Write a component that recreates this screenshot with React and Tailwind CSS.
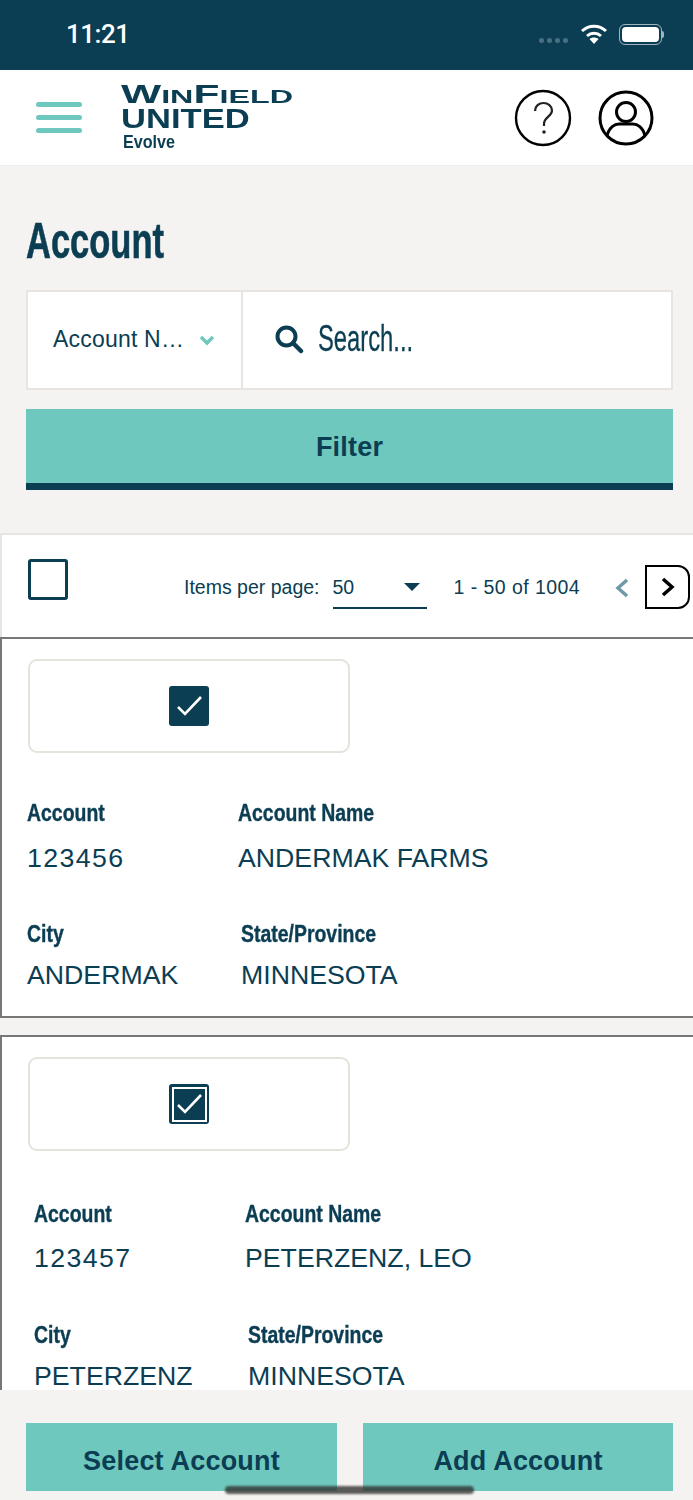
import React from 'react';

function Label({ children }) {
  return (
    <div className="h-[30px] text-[24px] leading-[30px] font-bold text-[#0b3d53] whitespace-nowrap origin-left scale-x-[0.81] [-webkit-text-stroke:0.4px_#0b3d53]">
      {children}
    </div>
  );
}

function Value({ children, className = '' }) {
  return (
    <div className={`h-[30px] text-[26.700px] leading-[30px] text-[#0b3d53] whitespace-nowrap ${className}`}>
      {children}
    </div>
  );
}

function Check({ ring }) {
  return (
    <div className="w-10 h-10 rounded-[3px] bg-[#0b3d53] flex items-center justify-center">
      <div className={`w-[35px] h-[35px] flex items-center justify-center ${ring ? 'border-2 border-white' : ''}`}>
        <svg width="28" height="24" viewBox="0 0 28 24" fill="none">
          <path d="M3 13l7 7L26 3" stroke="#fff" strokeWidth="2.6" />
        </svg>
      </div>
    </div>
  );
}

function CheckBox({ ring }) {
  return (
    <div className="ml-[1px] w-[322px] h-[94px] rounded-[9px] border-2 border-[#e6e2dc] bg-white flex items-center justify-center">
      <Check ring={ring} />
    </div>
  );
}

function Chevron({ color, width = 3 }) {
  return (
    <svg width="14" height="20" viewBox="0 0 14 20" fill="none">
      <path d="M2 2l9 8-9 8" stroke={color} strokeWidth={width} />
    </svg>
  );
}

export default function App() {
  return (
    <div className="relative w-[693px] h-[1500px] overflow-hidden flex flex-col bg-[#f4f3f1] font-['Liberation_Sans',sans-serif] text-[#0b3d53]">
      {/* status bar */}
      <div className="h-[70px] shrink-0 bg-[#0b3d53] flex items-center pl-[66px] pr-[29px] pb-[2px] text-white">
        <span className="text-[26px] font-medium font-['Roboto',sans-serif] tracking-[-0.5px]">11:21</span>
        <div className="ml-auto flex items-center">
          <div className="flex gap-[3px] mt-[12px] mr-[12px]">
            <i className="w-[5px] h-[5px] rounded-full bg-[#4a7082]" />
            <i className="w-[5px] h-[5px] rounded-full bg-[#4a7082]" />
            <i className="w-[5px] h-[5px] rounded-full bg-[#4a7082]" />
            <i className="w-[5px] h-[5px] rounded-full bg-[#4a7082]" />
          </div>
          <svg width="28" height="22" viewBox="0 0 28 22" fill="none" className="mr-[11px]">
            <path d="M2 8c7-6.500 17-6.500 24 0" stroke="#fff" strokeWidth="3" />
            <path d="M7 13c4-3.600 10-3.600 14 0" stroke="#fff" strokeWidth="3" />
            <path d="M14 21l-4.500-5c2.600-2 6.400-2 9 0z" fill="#fff" />
          </svg>
          <div className="w-[43px] h-[21px] rounded-[6px] border border-[#9fb4bf] p-[2px]">
            <div className="w-full h-full rounded-[4px] bg-white" />
          </div>
          <div className="w-[2px] h-[7px] bg-[#9fb4bf] rounded-r-sm" />
        </div>
      </div>

      {/* header */}
      <div className="h-[96px] shrink-0 bg-white flex items-center pl-9 pr-[38px] border-b border-[#efeeea]">
        <div className="flex flex-col gap-[8px] w-[46px]">
          <div className="h-[5px] rounded-full bg-[#6fc8bd]" />
          <div className="h-[5px] rounded-full bg-[#6fc8bd]" />
          <div className="h-[5px] rounded-full bg-[#6fc8bd]" />
        </div>
        <div className="ml-[39px] w-[175px] text-[#0b3d53] font-bold">
          <div className="h-[22px] leading-[22px] whitespace-nowrap origin-left scale-x-[1.7]">
            <span className="text-[25px]">W</span><span className="text-[19px]">IN</span><span className="text-[25px]">F</span><span className="text-[19px]">IELD</span>
          </div>
          <div className="h-[24px] mt-[2px] leading-[24px] text-[27px] whitespace-nowrap origin-left scale-x-[1.28]">UNITED</div>
          <div className="h-[22px] leading-[22px] text-[19px] ml-[2px] whitespace-nowrap origin-left scale-x-[0.85]">Evolve</div>
        </div>
        <svg width="58" height="58" viewBox="0 0 58 58" fill="none" className="ml-auto">
          <circle cx="29" cy="29" r="27" stroke="#000" strokeWidth="2.400" />
          <path d="M21 22c0-5 4-8 8.500-8s8.500 3 8.500 7.500c0 6-8 6.500-8 13.500v2" stroke="#222" strokeWidth="2.200" />
          <circle cx="30" cy="43" r="1.800" fill="#222" />
        </svg>
        <svg width="58" height="58" viewBox="0 0 58 58" fill="none" className="ml-[25px]">
          <circle cx="29" cy="29" r="26" stroke="#000" strokeWidth="3" />
          <circle cx="29" cy="23" r="9.500" stroke="#000" strokeWidth="3" />
          <path d="M10 47c2-9 8-12 12-12h14c4 0 10 3 12 12" stroke="#000" strokeWidth="3" />
        </svg>
      </div>

      {/* title + search */}
      <div className="shrink-0 pl-[26px] pr-5 pt-[46px]">
        <div className="h-[58px] text-[50px] leading-[58px] font-bold whitespace-nowrap origin-left scale-x-[0.69] [-webkit-text-stroke:0.6px_#0b3d53]">Account</div>
        <div className="mt-5 h-[100px] w-[647px] flex bg-white border-2 border-[#e8e4df]">
          <div className="w-[215px] shrink-0 border-r-2 border-[#e8e4df] flex items-center pl-[25px] pb-[1px]">
            <span className="text-[23px] tracking-[0.2px] whitespace-nowrap">Account N…</span>
            <svg width="16" height="11" viewBox="0 0 16 11" fill="none" className="ml-[15px] mt-[1px]">
              <path d="M2 2l6 6 6-6" stroke="#6fc8bd" strokeWidth="3.500" />
            </svg>
          </div>
          <div className="flex-1 flex items-center pl-[31px] pb-[3px]">
            <svg width="30" height="30" viewBox="0 0 30 30" fill="none">
              <circle cx="12.500" cy="12.500" r="9" stroke="#0b3d53" strokeWidth="4" />
              <path d="M19 19l8 8" stroke="#0b3d53" strokeWidth="4.500" strokeLinecap="round" />
            </svg>
            <span className="ml-[14px] text-[36px] leading-none whitespace-nowrap origin-left scale-x-[0.66] [-webkit-text-stroke:0.3px_#0b3d53]">Search...</span>
          </div>
        </div>
        <button className="mt-[19px] block w-[647px] h-[81px] pt-[2px] bg-[#6fc8bd] border-b-[7px] border-[#0b3d53] text-[27px] tracking-[0.2px] font-bold text-[#0b3d53]">
          Filter
        </button>
      </div>

      {/* pager */}
      <div className="mt-[43px] h-[104px] shrink-0 bg-white border-t-2 border-l-2 border-[#e8e4df] flex items-center pl-[26px]">
        <div className="w-10 h-[41px] rounded-[3px] border-[3px] border-[#0b3d53] mt-[-14px]" />
        <span className="ml-[116px] mt-[3px] text-[19.500px] whitespace-nowrap">Items per page:</span>
        <div className="ml-[13px] w-[94px] h-[42px] pt-[3px] border-b-2 border-[#0b3d53] flex items-center mt-[3px]">
          <span className="text-[19.500px]">50</span>
          <div className="ml-auto mr-[7px] mt-[-3px] w-0 h-0 border-x-[8px] border-x-transparent border-t-[8px] border-t-[#0b3d53]" />
        </div>
        <span className="ml-[27px] mt-[3px] text-[19.500px] tracking-[0.45px] whitespace-nowrap">1 - 50 of 1004</span>
        <div className="ml-[35px] mt-[3px] rotate-180">
          <Chevron color="#6f9aa6" width={3.5} />
        </div>
        <div className="ml-[16px] w-[45px] h-[44px] mt-[1px] rounded-r-[12px] border-2 border-black flex items-center justify-center">
          <Chevron color="#000" width={3.5} />
        </div>
      </div>

      {/* list */}
      <div className="flex-1 min-h-0 overflow-hidden">
        <div className="h-[381px] bg-white border-y-2 border-l-2 border-[#777] pl-[25px] pt-[20px]">
          <CheckBox />
          <div className="mt-[45px] grid grid-cols-[211px_1fr]">
            <Label>Account</Label>
            <Label>Account Name</Label>
            <Value className="mt-[15px] tracking-[1.400px]">123456</Value>
            <Value className="mt-[15px]">ANDERMAK FARMS</Value>
          </div>
          <div className="mt-[46px] grid grid-cols-[214px_1fr]">
            <Label>City</Label>
            <Label>State/Province</Label>
            <Value className="mt-[11px]">ANDERMAK</Value>
            <Value className="mt-[11px]">MINNESOTA</Value>
          </div>
        </div>
        <div className="mt-[17px] h-[400px] bg-white border-t-2 border-l-2 border-[#777] pl-[25px] pt-[20px]">
          <CheckBox ring />
          <div className="ml-[7px] mt-[48px] grid grid-cols-[211px_1fr]">
            <Label>Account</Label>
            <Label>Account Name</Label>
            <Value className="mt-[14px] tracking-[1.400px]">123457</Value>
            <Value className="mt-[14px]">PETERZENZ, LEO</Value>
          </div>
          <div className="ml-[7px] mt-[47px] grid grid-cols-[214px_1fr]">
            <Label>City</Label>
            <Label>State/Province</Label>
            <Value className="mt-[11px]">PETERZENZ</Value>
            <Value className="mt-[11px]">MINNESOTA</Value>
          </div>
        </div>
      </div>

      {/* footer */}
      <div className="h-[110px] shrink-0 bg-[#f4f3f1] pl-[26px] pr-5 pt-[33px] flex gap-[26px]">
        <button className="w-[311px] h-[68px] pt-[8px] bg-[#6fc8bd] text-[27px] tracking-[0.2px] font-bold text-[#0b3d53]">Select Account</button>
        <button className="w-[310px] h-[68px] pt-[8px] bg-[#6fc8bd] text-[27px] tracking-[0.2px] font-bold text-[#0b3d53]">Add Account</button>
      </div>

      {/* home indicator */}
      <div className="absolute left-[225px] top-[1486px] w-[249px] h-2 rounded-full bg-[#333]/80 blur-[1px]" />
    </div>
  );
}
